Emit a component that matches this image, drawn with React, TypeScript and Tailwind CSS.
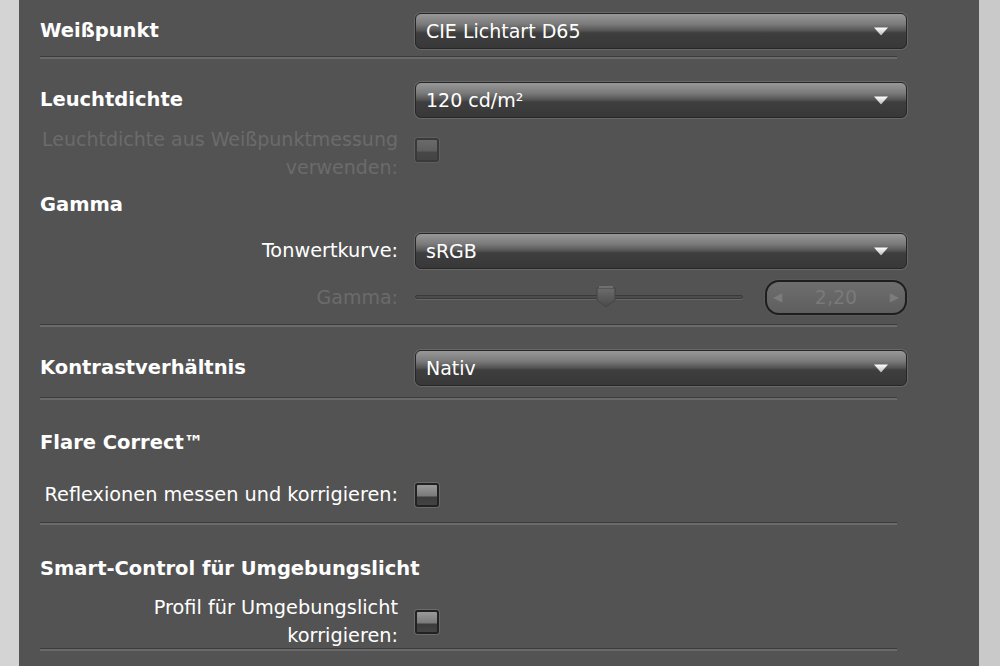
import type { ReactNode } from 'react'

const FONT = '[font-family:Tahoma,"DejaVu_Sans","Noto_Sans",sans-serif]'

function Arrow() {
  return (
    <svg width="14" height="9" viewBox="0 0 14 9" className="absolute right-[18px] top-1/2 -translate-y-1/2">
      <defs>
        <linearGradient id="arr" x1="0" y1="0" x2="0" y2="1">
          <stop offset="0" stopColor="#ffffff" />
          <stop offset="1" stopColor="#b8b8b8" />
        </linearGradient>
      </defs>
      <polygon points="0,1 14,1 7,9" fill="url(#arr)" />
    </svg>
  )
}

function Dropdown({ value }: { value: string }) {
  return (
    <div className="relative h-[36px] w-[492px] rounded-[6px] border border-[#262626] shadow-[0_0_0_1px_#686868] bg-[linear-gradient(to_bottom,#989898_0%,#7a7a7a_30%,#575757_48%,#3e3e3e_56%,#383838_100%)]">
      <span className="absolute left-[10px] top-1/2 -translate-y-1/2 text-[19px] leading-none text-white">{value}</span>
      <Arrow />
    </div>
  )
}

function Checkbox({ disabled }: { disabled?: boolean }) {
  return (
    <div
      className={
        disabled
          ? 'h-[24px] w-[24px] shrink-0 rounded-[3px] border-2 border-[#3a3a3a] shadow-[0_0_0_1px_#5e5e5e] bg-[linear-gradient(to_bottom,#6a6a6a_0%,#5e5e5e_55%,#474747_60%,#444444_100%)]'
          : 'h-[24px] w-[24px] shrink-0 rounded-[3px] border-2 border-[#222222] shadow-[0_0_0_1px_#6a6a6a] bg-[linear-gradient(to_bottom,#9a9a9a_0%,#7a7a7a_55%,#3c3c3c_60%,#444444_100%)]'
      }
    />
  )
}

function Separator() {
  return <div className="h-[3px] w-[857px] border-t border-[#3c3c3c] bg-[#6a6a6a]" />
}

function Row({ label, children, className = '', muted }: { label: ReactNode; children: ReactNode; className?: string; muted?: boolean }) {
  return (
    <div className={`flex items-center gap-[17px] ${className}`}>
      <div
        className={`w-[358px] shrink-0 whitespace-nowrap text-right leading-[28px] ${
          muted ? 'text-[19px] text-[#6b6b6b]' : 'text-[19.3px] text-white'
        }`}
      >
        {label}
      </div>
      {children}
    </div>
  )
}

function Heading({ children, className = '' }: { children: ReactNode; className?: string }) {
  return <div className={`text-[19.5px] font-bold leading-[28px] text-white ${className}`}>{children}</div>
}

export default function App() {
  return (
    <div className={`flex h-[666px] w-[1000px] overflow-hidden bg-[#d3d3d3] ${FONT}`}>
      <div className="w-[19px] shrink-0 bg-[#d4d4d4]" />
      <div className="w-[960px] shrink-0 bg-[#535353] pl-[21px] pt-[13px]">
        <div className="flex items-center gap-[17px]">
          <Heading className="w-[358px]">Weißpunkt</Heading>
          <Dropdown value="CIE Lichtart D65" />
        </div>
        <div className="mt-[7px]">
          <Separator />
        </div>

        <div className="mt-[23px] flex items-center gap-[17px]">
          <Heading className="w-[358px]">Leuchtdichte</Heading>
          <Dropdown value="120 cd/m²" />
        </div>
        <Row className="mt-[7px]" muted label={<>Leuchtdichte aus Weißpunktmessung<br />verwenden:</>}>
          <div className="-mt-[6px]">
            <Checkbox disabled />
          </div>
        </Row>

        <Heading className="mt-[10px]">Gamma</Heading>
        <Row className="mt-[14px]" label="Tonwertkurve:">
          <Dropdown value="sRGB" />
        </Row>
        <Row className="mt-[10px]" muted label="Gamma:">
          <div className="flex items-center gap-[22px]">
            <div className="relative h-[36px] w-[328px]">
              <div className="absolute left-0 right-0 top-1/2 h-[4px] -translate-y-1/2 rounded-full border border-[#3a3a3a] bg-[#4c4c4c] shadow-[0_1px_0_#666]" />
              <svg width="22" height="26" viewBox="0 0 22 26" className="absolute left-[180px] top-[3px]">
                <defs>
                  <linearGradient id="thumb" x1="0" y1="0" x2="0" y2="1">
                    <stop offset="0" stopColor="#6c6c6c" />
                    <stop offset="1" stopColor="#4a4a4a" />
                  </linearGradient>
                </defs>
                <polygon points="2,6 20,6 20,18 11,25 2,18" fill="url(#thumb)" stroke="#444" strokeWidth="1" />
                <line x1="4" y1="5" x2="18" y2="5" stroke="#7a7a7a" strokeWidth="1.5" />
              </svg>
            </div>
            <div className="relative flex h-[35px] w-[142px] items-center justify-between rounded-[14px] border-2 border-[#1e1e1e] bg-[linear-gradient(to_bottom,#6e6e6e,#5e5e5e)] px-[6px] shadow-[0_0_0_1px_#5a5a5a]">
              <span className="text-[12px] leading-none text-[#7c7c7c]">◀</span>
              <span className="text-[19px] leading-none text-[#7a7a7a]">2,20</span>
              <span className="text-[12px] leading-none text-[#7c7c7c]">▶</span>
            </div>
          </div>
        </Row>
        <div className="mt-[9px]">
          <Separator />
        </div>

        <div className="mt-[23px] flex items-center gap-[17px]">
          <Heading className="w-[358px]">Kontrastverhältnis</Heading>
          <Dropdown value="Nativ" />
        </div>
        <div className="mt-[11px]">
          <Separator />
        </div>

        <Heading className="mt-[29px]">Flare Correct™</Heading>
        <Row className="mt-[24px]" label="Reflexionen messen und korrigieren:">
          <Checkbox />
        </Row>
        <div className="mt-[13px]">
          <Separator />
        </div>

        <Heading className="mt-[30px]">Smart-Control für Umgebungslicht</Heading>
        <Row className="mt-[11px]" label={<>Profil für Umgebungslicht<br />korrigieren:</>}>
          <Checkbox />
        </Row>
        <div className="-mt-[2px]">
          <Separator />
        </div>
      </div>
      <div className="flex-1 bg-[#c9c9c9]" />
    </div>
  )
}
